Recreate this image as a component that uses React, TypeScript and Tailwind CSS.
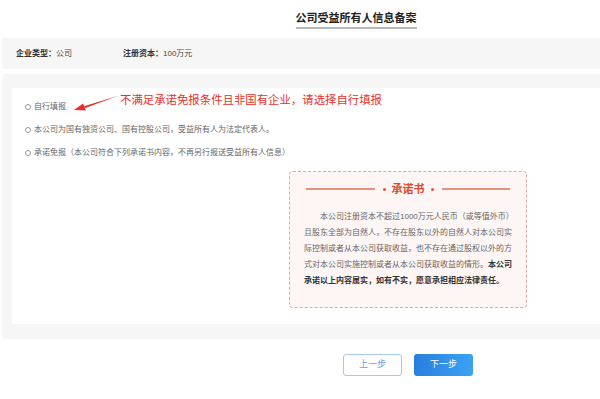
const font = { fontFamily: '"Liberation Sans", "Noto Sans CJK SC", sans-serif' };

function Radio({ label }: { label: string }) {
  return (
    <div className="h-[23px] flex items-center pl-[13px] text-[8px] text-[#666]">
      <span className="w-[6px] h-[6px] rounded-full border border-[#999] bg-white mr-[2px]"></span>
      <span className="ml-[1px]">{label}</span>
    </div>
  );
}

function Dot() {
  return <span className="w-[3px] h-[3px] rounded-full bg-[#e0553d]"></span>;
}

function App() {
  return (
    <div className="w-[600px] h-[399px] overflow-hidden bg-white" style={font}>
      <div className="w-[816px] px-[2px]">
        <div className="w-[708px] h-[38px] flex justify-center">
          <h1 className="mt-[11px] h-[18px] leading-[15px] text-[11px] font-bold text-[#222] border-b-2 border-[#b8b8b8]">
            公司受益所有人信息备案
          </h1>
        </div>

        <div className="h-[31px] bg-[#f6f6f6] rounded-[3px] flex items-center px-[14px] text-[8px] text-[#444]">
          <div className="w-[107px]">
            <span className="font-bold text-[#333]">企业类型：</span>公司
          </div>
          <div>
            <span className="font-bold text-[#333]">注册资本：</span>100万元
          </div>
        </div>

        <div className="mt-[5px] bg-[#f6f6f6] rounded-[3px] pt-[14px] pb-[15px] px-[10px]">
          <div className="relative h-[236px] bg-white pt-[7px]">
            <Radio label="自行填报" />
            <Radio label="本公司为国有独资公司、国有控股公司，受益所有人为法定代表人。" />
            <Radio label="承诺免报（本公司符合下列承诺书内容，不再另行报送受益所有人信息）" />

            <div className="mt-[7px] mx-auto w-[238px] h-[137px] rounded-[4px] border border-dashed border-[#e9a79c] bg-[#fdf6f5] pt-[9px] px-[14px]">
              <div className="h-[16px] flex items-center px-[2px]">
                <div className="flex-1 h-[2px] bg-[#e8907e]"></div>
                <span className="ml-[8px] mr-[6px] flex"><Dot /></span>
                <span className="text-[11px] font-bold text-[#db4a2e] leading-[16px]">承诺书</span>
                <span className="ml-[6px] mr-[8px] flex"><Dot /></span>
                <div className="flex-1 h-[2px] bg-[#e8907e]"></div>
              </div>
              <p className="mt-[12px] text-[8px] leading-[16px] text-[#666] indent-[16px]">
                本公司注册资本不超过1000万元人民币（或等值外币）且股东全部为自然人，不存在股东以外的自然人对本公司实际控制或者从本公司获取收益，也不存在通过股权以外的方式对本公司实施控制或者从本公司获取收益的情形。<span className="font-bold text-[#333]">本公司承诺以上内容属实，如有不实，愿意承担相应法律责任。</span>
              </p>
            </div>

            <div className="absolute left-[108px] top-[4px] text-[11.4px] leading-[16px] text-[#e8302a] whitespace-nowrap">
              不满足承诺免报条件且非国有企业，请选择自行填报
            </div>
            <svg className="absolute left-[58px] top-[5px]" width="50" height="20" viewBox="0 0 50 20">
              <path d="M49 2.5 L14 13.2 L14.6 15.2 Z" fill="#e8302a" />
              <path d="M4 17 L13 10.6 L15.8 17.4 Z" fill="#e8302a" />
            </svg>
          </div>
        </div>

        <div className="mt-[15px] flex justify-center gap-[12px]">
          <button className="w-[59px] h-[22px] rounded-[3px] border border-[#a9c7ec] bg-white text-[9px] text-[#6b9fd9]">
            上一步
          </button>
          <button className="w-[59px] h-[22px] rounded-[3px] bg-gradient-to-r from-[#2a7ddf] to-[#3ba3f4] text-[9px] text-white">
            下一步
          </button>
        </div>
      </div>
    </div>
  );
}

export default App;
